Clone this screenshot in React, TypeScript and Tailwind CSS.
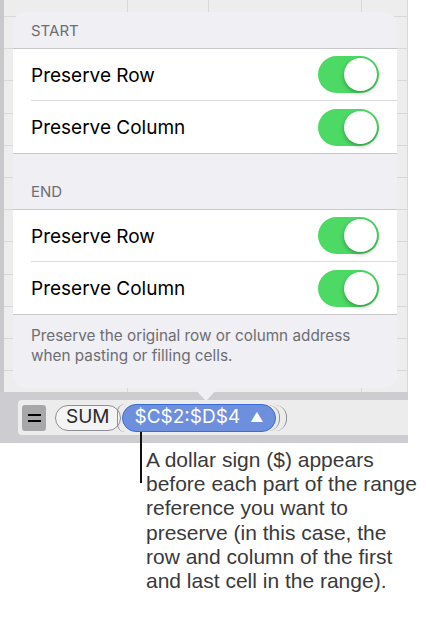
const rows = Array.from({ length: 12 });
const cols = [124, 81, 153, 46];

function Toggle() {
  return (
    <div className="relative w-[61px] h-[37px] rounded-full bg-[#4cd964]">
      <div className="absolute right-[2px] top-[2px] w-[33px] h-[33px] rounded-full bg-white shadow-[0_2px_4px_rgba(0,0,0,0.3)]" />
    </div>
  );
}

function Row({ label, last }: { label: string; last?: boolean }) {
  return (
    <div className="flex items-center h-[52px] pl-[18px] bg-white">
      <div className={`flex items-center justify-between h-full flex-1 pr-[18px] ${last ? "" : "border-b border-[#dcdce0]"}`}>
        <span className="text-[19px] text-black pt-[3px]">{label}</span>
        <Toggle />
      </div>
    </div>
  );
}

export default function App() {
  return (
    <div className="w-[426px] h-[622px] bg-white" style={{ fontFamily: "Inter, 'Noto Sans', sans-serif" }}>
      <div className="relative w-[408px] h-[443px] bg-[#ededed]">
        {/* spreadsheet grid */}
        <div className="flex h-[392px] overflow-hidden">
          <div className="w-[4px] bg-[#c9c9cc]" />
          <div className="flex flex-col flex-1">
            <div className="flex h-[16px] shrink-0">
              {cols.map((w, i) => (
                <div key={i} style={{ width: w }} className="border-r border-[#d8d8d8] shrink-0" />
              ))}
            </div>
            {rows.map((_, r) => (
              <div key={r} className="flex h-[32.2px] shrink-0 border-t border-[#d8d8d8]">
                {cols.map((w, i) => (
                  <div key={i} style={{ width: w }} className="border-r border-[#d8d8d8] shrink-0" />
                ))}
              </div>
            ))}
          </div>
        </div>

        {/* formula bar */}
        <div className="h-[51px] bg-[#cdcdd1] py-[8px] pl-[18px]">
          <div className="h-[35px] bg-[#ececec] flex items-center pl-[4px] rounded-l-[4px]">
            <div className="w-[24px] h-[26px] bg-[#a7a7aa] rounded-[3px] flex items-center justify-center">
              <div className="flex flex-col gap-[4px]">
                <div className="w-[13px] h-[2px] bg-black" />
                <div className="w-[13px] h-[2px] bg-black" />
              </div>
            </div>
            <div className="ml-[9px] h-[26px] px-[10px] rounded-full border border-[#8e8e93] bg-[#f4f4f4] flex items-center text-[19px] text-[#2a2a2a]">
              SUM
            </div>
            <div className="-ml-[4px] h-[28px] w-[8px] rounded-l-full border-l border-[#8e8e93]" />
            <div className="-ml-[3px] h-[28px] px-[12px] rounded-full border border-[#3b6bd4] bg-[#6e8fdd] flex items-center gap-[10px] text-[19px] text-white">
              <span>$C$2:$D$4</span>
              <span className="text-[13px]">▲</span>
            </div>
            <div className="-ml-[8px] h-[26px] w-[12px] rounded-r-full border-r border-[#8e8e93]" />
            <div className="-ml-[5px] h-[26px] w-[12px] rounded-r-full border-r border-[#8e8e93]" />
          </div>
        </div>

        {/* popover */}
        <div className="absolute left-[13px] top-[12px] w-[384px] h-[376px] rounded-[13px] bg-[#efeff4]">
          <div className="h-[36px] pl-[18px] flex items-center text-[15px] text-[#6d6d72] pt-[2px]">START</div>
          <div className="border-y border-[#c8c7cc]">
            <Row label="Preserve Row" />
            <Row label="Preserve Column" last />
          </div>
          <div className="h-[55px] pl-[18px] flex items-end pb-[6px] text-[15px] text-[#6d6d72]">END</div>
          <div className="border-y border-[#c8c7cc]">
            <Row label="Preserve Row" />
            <Row label="Preserve Column" last />
          </div>
          <div className="pl-[18px] pt-[11px] text-[15.3px] leading-[19.5px] text-[#6d6d72]">
            Preserve the original row or column address
            <br />
            when pasting or filling cells.
          </div>
          <div className="absolute left-[180px] top-[375px] w-0 h-0 border-x-[13px] border-x-transparent border-t-[14px] border-t-[#efeff4]" />
        </div>
      </div>

      {/* callout */}
      <div className="flex pl-[140px]">
        <div className="relative z-10 w-[2px] h-[51px] -mt-[11px] bg-[#111]" />
        <div
          className="pl-[4px] pt-[5px] text-[21px] leading-[24.2px] text-[#3a3a3a]"
          style={{ fontFamily: "'Liberation Sans', Arial, sans-serif" }}
        >
          A dollar sign ($) appears
          <br />
          before each part of the range
          <br />
          reference you want to
          <br />
          preserve (in this case, the
          <br />
          row and column of the first
          <br />
          and last cell in the range).
        </div>
      </div>
    </div>
  );
}
